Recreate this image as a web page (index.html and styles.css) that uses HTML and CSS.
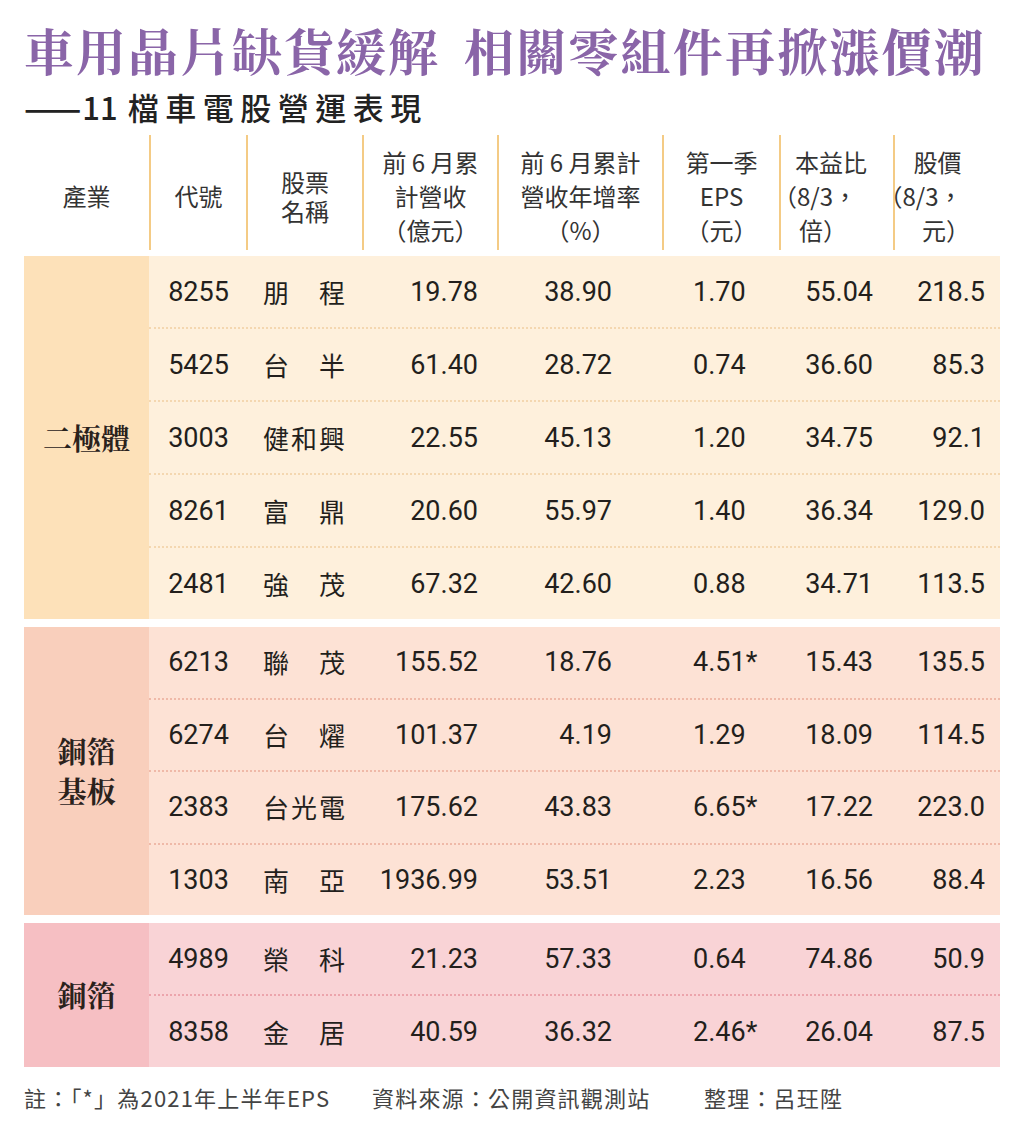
FILE: index.html
```html
<!DOCTYPE html>
<html lang="zh-Hant">
<head>
<meta charset="utf-8">
<title>車用晶片缺貨緩解 相關零組件再掀漲價潮</title>
<link rel="stylesheet" href="styles.css">
</head>
<body>
<div class="sheet">
  <h1 class="title"><span class="t1">車用晶片缺貨緩解</span><span class="t2">相關零組件再掀漲價潮</span></h1>
  <div class="subtitle"><span class="dash">——</span><span class="num">11</span><span class="sub-cjk">檔車電股營運表現</span></div>

  <div class="table">
    <div class="head">
      <div class="hc"><div class="ht">產業</div></div>
      <div class="hc line"><div class="ht">代號</div></div>
      <div class="hc line two"><div class="ht">股票<br>名稱</div></div>
      <div class="hc line"><div class="ht">前 6 月累<br>計營收<br><span class="p">（</span>億元<span class="p">）</span></div></div>
      <div class="hc line"><div class="ht">前 6 月累計<br>營收年增率<br><span class="p">（</span>%<span class="p">）</span></div></div>
      <div class="hc line"><div class="ht">第一季<br>EPS<br><span class="p">（</span>元<span class="p">）</span></div></div>
      <div class="hc line"><div class="ht pe-h">本益比<br><span class="l2"><span class="p">（</span>8/3<span class="p">，</span></span><br><span class="l3">倍<span class="p">）</span></span></div></div>
      <div class="hc line"><div class="ht px-h">股價<br><span class="l2"><span class="p">（</span>8/3<span class="p">，</span></span><br><span class="l3">元<span class="p">）</span></span></div></div>
    </div>

    <div class="group g1">
      <div class="label">二極體</div>
      <div class="rows">
        <div class="row"><span class="c code">8255</span><span class="c name">朋　程</span><span class="c rev">19.78</span><span class="c gr">38.90</span><span class="c eps">1.70</span><span class="c pe">55.04</span><span class="c px">218.5</span></div>
        <div class="row"><span class="c code">5425</span><span class="c name">台　半</span><span class="c rev">61.40</span><span class="c gr">28.72</span><span class="c eps">0.74</span><span class="c pe">36.60</span><span class="c px">85.3</span></div>
        <div class="row"><span class="c code">3003</span><span class="c name">健和興</span><span class="c rev">22.55</span><span class="c gr">45.13</span><span class="c eps">1.20</span><span class="c pe">34.75</span><span class="c px">92.1</span></div>
        <div class="row"><span class="c code">8261</span><span class="c name">富　鼎</span><span class="c rev">20.60</span><span class="c gr">55.97</span><span class="c eps">1.40</span><span class="c pe">36.34</span><span class="c px">129.0</span></div>
        <div class="row"><span class="c code">2481</span><span class="c name">強　茂</span><span class="c rev">67.32</span><span class="c gr">42.60</span><span class="c eps">0.88</span><span class="c pe">34.71</span><span class="c px">113.5</span></div>
      </div>
    </div>

    <div class="group g2">
      <div class="label">銅箔<br>基板</div>
      <div class="rows">
        <div class="row"><span class="c code">6213</span><span class="c name">聯　茂</span><span class="c rev">155.52</span><span class="c gr">18.76</span><span class="c eps">4.51*</span><span class="c pe">15.43</span><span class="c px">135.5</span></div>
        <div class="row"><span class="c code">6274</span><span class="c name">台　燿</span><span class="c rev">101.37</span><span class="c gr">4.19</span><span class="c eps">1.29</span><span class="c pe">18.09</span><span class="c px">114.5</span></div>
        <div class="row"><span class="c code">2383</span><span class="c name">台光電</span><span class="c rev">175.62</span><span class="c gr">43.83</span><span class="c eps">6.65*</span><span class="c pe">17.22</span><span class="c px">223.0</span></div>
        <div class="row"><span class="c code">1303</span><span class="c name">南　亞</span><span class="c rev">1936.99</span><span class="c gr">53.51</span><span class="c eps">2.23</span><span class="c pe">16.56</span><span class="c px">88.4</span></div>
      </div>
    </div>

    <div class="group g3">
      <div class="label">銅箔</div>
      <div class="rows">
        <div class="row"><span class="c code">4989</span><span class="c name">榮　科</span><span class="c rev">21.23</span><span class="c gr">57.33</span><span class="c eps">0.64</span><span class="c pe">74.86</span><span class="c px">50.9</span></div>
        <div class="row"><span class="c code">8358</span><span class="c name">金　居</span><span class="c rev">40.59</span><span class="c gr">36.32</span><span class="c eps">2.46*</span><span class="c pe">26.04</span><span class="c px">87.5</span></div>
      </div>
    </div>
  </div>

  <div class="foot">
    <span class="f1">註：「*」為2021年上半年EPS</span>
    <span class="f2">資料來源：公開資訊觀測站</span>
    <span class="f3">整理：呂玨陞</span>
  </div>
</div>
</body>
</html>
```

FILE: styles.css
```css
html, body {
  margin: 0;
  padding: 0;
  background: #ffffff;
}

.sheet {
  width: 976px;
  padding: 19px 24px 0 24px;
  font-family: "Noto Sans CJK TC", "Noto Sans CJK SC", sans-serif;
  color: #222;
}

.title {
  margin: 0;
  font-family: "Noto Serif CJK TC", "Noto Sans CJK TC", serif;
  font-weight: 700;
  font-size: 50px;
  line-height: 60px;
  color: #8a65a8;
  white-space: nowrap;
  display: flex;
}

.t1 {
  letter-spacing: 2px;
}

.t2 {
  margin-left: 24px;
  letter-spacing: 2.2px;
}

.subtitle {
  margin-top: 10px;
  font-size: 31px;
  line-height: 36px;
  font-weight: 500;
  color: #222;
  white-space: nowrap;
  display: flex;
  align-items: center;
}

.dash {
  font-size: 34px;
  letter-spacing: -1px;
}

.num {
  margin-left: 2px;
}

.sub-cjk {
  margin-left: 10px;
  letter-spacing: 6.5px;
}

.table {
  margin-top: 10px;
  width: 976px;
}

.head {
  display: grid;
  grid-template-columns: 125px 97px 116px 135px 165px 117px 114px 107px;
  height: 115px;
}

.hc {
  display: flex;
  align-items: center;
  justify-content: center;
  box-sizing: border-box;
  padding-top: 6px;
}

.ht {
  text-align: center;
  font-size: 24px;
  line-height: 34px;
  color: #333;
  font-weight: 400;
  white-space: nowrap;
}

.hc.two .ht {
  line-height: 29px;
}

.hc.line {
  border-left: 2px solid #f4cb85;
}

.p {
  display: inline-block;
  width: 1em;
  text-align: center;
}

.l2,
.l3 {
  display: inline-block;
}

.pe-h { padding-right: 12px; }
.pe-h .l2 { margin-right: 32px; }
.pe-h .l3 { margin-right: 16px; }

.px-h { padding-right: 20px; }
.px-h .l2 { margin-right: 34px; }
.px-h .l3 { margin-left: 17px; }

.group {
  display: grid;
  grid-template-columns: 125px 851px;
  margin-top: 8px;
}

.head + .group {
  margin-top: 6px;
}

.g1 { height: 363px; background: #fef0dc; }
.g2 { height: 288px; background: #fde2d5; }
.g3 { height: 144px; background: #f9d3d6; }

.label {
  display: flex;
  align-items: center;
  justify-content: center;
  text-align: center;
  font-family: "Noto Serif CJK TC", "Noto Sans CJK TC", serif;
  font-weight: 700;
  font-size: 29px;
  line-height: 40px;
  color: #2a221c;
}

.g1 .label { background: #fde1b9; }
.g2 .label { background: #f9cfbc; }
.g3 .label { background: #f6bfc3; }

.rows {
  display: flex;
  flex-direction: column;
}

.row {
  flex: 1;
  display: grid;
  grid-template-columns: 97px 116px 135px 165px 117px 114px 107px;
  align-items: center;
  box-sizing: border-box;
}

.row + .row {
  border-top: 2px dotted #f4d7b0;
}

.g2 .row + .row { border-top-color: #efb9a8; }
.g3 .row + .row { border-top-color: #eca4ac; }

.c {
  font-family: Roboto, "Noto Sans CJK TC", sans-serif;
  font-size: 27px;
  line-height: 32px;
  color: #231f1c;
  white-space: nowrap;
}

.code { text-align: center; padding-left: 2px; }

.name {
  font-family: "Noto Sans CJK TC", sans-serif;
  font-size: 26px;
  text-align: center;
  letter-spacing: 2px;
  padding-left: 2px;
}

.rev { text-align: right; padding-right: 19px; }
.gr  { text-align: right; padding-right: 50px; }
.eps { text-align: left;  padding-left: 31px; }
.pe  { text-align: right; padding-right: 20px; }
.px  { text-align: right; padding-right: 15px; }

.foot {
  display: flex;
  margin-top: 15px;
  font-size: 22px;
  line-height: 30px;
  color: #444;
  white-space: nowrap;
  letter-spacing: 1.2px;
}

.f1 { width: 348px; }
.f2 { width: 332px; }
```
